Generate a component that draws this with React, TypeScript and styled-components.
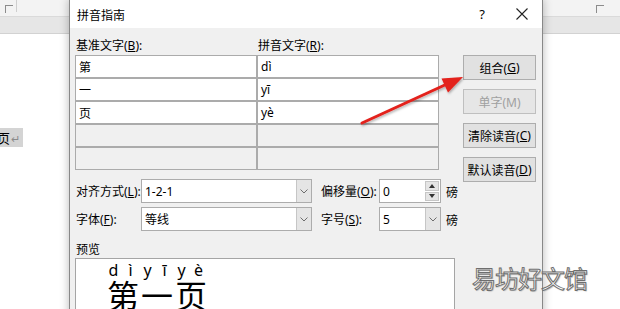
import React from "react";
import styled, { createGlobalStyle } from "styled-components";

const GlobalStyle = createGlobalStyle`
  html, body { margin: 0; padding: 0; background: #ffffff; }
  body { font-family: "Noto Sans", "Noto Sans CJK SC", sans-serif; font-size: 12px; color: #000; }
`;

const Screen = styled.div`
  position: relative;
  width: 620px;
  height: 309px;
  overflow: hidden;
  background: #ffffff;
`;

const RibbonStrip = styled.div`
  height: 16px;
  background: #f3f3f3;
  border-bottom: 1px solid #dadada;
  display: flex;
  align-items: flex-start;
`;

const Launcher = styled.div<{ $left: number }>`
  width: 7px;
  height: 7px;
  margin: 5px 0 0 ${(p) => p.$left}px;
  border: 1px solid #8c8c8c;
  border-right: none;
  border-bottom: none;
`;

const Divider = styled.div`
  width: 1px;
  height: 12px;
  margin-left: 3px;
  background: #cfcfcf;
`;

const RulerBand = styled.div`
  height: 16px;
  background: #e6e6e6;
  border-bottom: 1px solid #d2d2d2;
`;

const DocArea = styled.div`
  padding-top: 94px;
`;

const DocLine = styled.div`
  display: inline-flex;
  align-items: center;
  height: 19px;
  margin-left: -3px;
  padding-right: 3px;
  background: #d4d4d4;
  font-family: "Noto Sans CJK SC", sans-serif;
  font-size: 13px;
`;

const Pilcrow = styled.span`
  color: #8a8a8a;
  font-size: 11px;
  margin-left: 1px;
`;

const Dialog = styled.div`
  position: absolute;
  left: 69px;
  top: -1px;
  width: 472px;
  height: 330px;
  background: #f0f0f0;
  border: 1px solid #888888;
  box-shadow: 0 0 9px rgba(0, 0, 0, 0.28);
  display: flex;
  flex-direction: column;
`;

const TitleBar = styled.div`
  height: 28px;
  background: #ffffff;
  display: flex;
  align-items: center;
  padding-left: 7px;
`;

const Title = styled.span`
  font-family: "Noto Sans CJK SC", sans-serif;
  font-size: 12px;
  flex: 1;
`;

const TitleButton = styled.div`
  width: 40px;
  height: 28px;
  display: flex;
  align-items: center;
  justify-content: center;
  font-family: "Noto Sans", sans-serif;
  font-size: 13px;
`;

const Body = styled.div`
  padding: 7px 5px 0 5px;
  display: grid;
  grid-template-columns: 364px 73px;
  column-gap: 24px;
  align-items: start;
`;

const LabelRow = styled.div`
  display: grid;
  grid-template-columns: 182px 182px;
  height: 20px;
  align-items: center;
`;

const Label = styled.span<{ $pad?: number }>`
  padding-left: ${(p) => p.$pad ?? 1}px;
  font-size: 12px;
  white-space: nowrap;
  u { text-decoration-thickness: 1px; text-underline-offset: 1px; }
`;

const Table = styled.div`
  display: grid;
  grid-template-columns: 182px 182px;
  grid-auto-rows: 23px;
`;

const Cell = styled.div<{ $empty?: boolean }>`
  border: 1px solid #ababab;
  background: ${(p) => (p.$empty ? "#f0f0f0" : "#ffffff")};
  padding-left: 3px;
  display: flex;
  align-items: center;
  font-size: 12px;
`;

const ButtonColumn = styled.div`
  grid-column: 2;
  grid-row: 1 / span 2;
  display: flex;
  flex-direction: column;
  gap: 9px;
  padding-top: 20px;
`;

const PushButton = styled.div<{ $disabled?: boolean }>`
  height: 25px;
  box-sizing: border-box;
  border: 1px solid ${(p) => (p.$disabled ? "#bfbfbf" : "#adadad")};
  background: ${(p) => (p.$disabled ? "#e6e6e6" : "#e1e1e1")};
  color: ${(p) => (p.$disabled ? "#a0a0a0" : "#000")};
  display: flex;
  align-items: center;
  justify-content: center;
  font-size: 12px;
  u { text-decoration-thickness: 1px; text-underline-offset: 1px; }
`;

const FormGrid = styled.div`
  grid-column: 1;
  width: max-content;
  display: grid;
  grid-template-columns: 66px 171px 67px 62px auto;
  grid-auto-rows: 24px;
  row-gap: 4px;
  margin-top: 9px;
  align-items: center;
`;

const Field = styled.div`
  height: 24px;
  box-sizing: border-box;
  border: 1px solid #acacac;
  background: #ffffff;
  display: flex;
  align-items: stretch;
`;

const FieldValue = styled.div`
  flex: 1;
  padding-left: 3px;
  display: flex;
  align-items: center;
  font-size: 12px;
`;

const DropButton = styled.div`
  width: 14px;
  background: #e5e5e5;
  border-left: 1px solid #c6c6c6;
  display: flex;
  align-items: center;
  justify-content: center;
`;

const Spinner = styled.div`
  width: 14px;
  display: flex;
  flex-direction: column;
  gap: 1px;
  padding: 1px 1px 1px 0;
`;

const SpinPart = styled.div`
  flex: 1;
  background: #e5e5e5;
  border: 1px solid #c6c6c6;
  display: flex;
  align-items: center;
  justify-content: center;
`;

const Unit = styled.span`
  padding-left: 5px;
  font-family: "Noto Sans CJK SC", sans-serif;
  font-size: 12px;
`;

const PreviewSection = styled.div`
  grid-column: 1 / -1;
`;

const PreviewLabel = styled.div`
  height: 18px;
  margin-top: 9px;
  display: flex;
  align-items: center;
  padding-left: 1px;
  font-size: 12px;
`;

const PreviewBox = styled.div`
  width: 380px;
  height: 70px;
  box-sizing: border-box;
  border: 1px solid #a5a5a5;
  background: #ffffff;
  padding: 4px 0 0 29px;
`;

const PinyinRow = styled.div`
  display: flex;
  height: 15px;
  align-items: center;
`;

const PinyinLetter = styled.span`
  width: 17px;
  text-align: center;
  font-family: "Noto Sans", sans-serif;
  font-size: 16px;
  line-height: 15px;
`;

const BigText = styled.div`
  font-family: "Noto Sans CJK SC", sans-serif;
  font-size: 32px;
  line-height: 32px;
  margin-left: 2px;
  letter-spacing: 2px;
`;

const Watermark = styled.div`
  position: absolute;
  left: 472px;
  top: 260px;
  font-family: "Noto Sans CJK SC", sans-serif;
  font-size: 24px;
  color: #ffffff;
  -webkit-text-stroke: 1px #6e6e6e;
  text-shadow: 1px 1px 1px rgba(0, 0, 0, 0.25);
  letter-spacing: -1px;
`;

const ArrowLayer = styled.svg`
  position: absolute;
  left: 0;
  top: 0;
  pointer-events: none;
`;

const Chevron = () => (
  <svg width="8" height="5" viewBox="0 0 8 5">
    <path d="M0.5 0.5 L4 4 L7.5 0.5" fill="none" stroke="#6d6d6d" strokeWidth="1" />
  </svg>
);

const Tri = ({ up }: { up?: boolean }) => (
  <svg width="6" height="4" viewBox="0 0 6 4">
    <path d={up ? "M0 4 L3 0 L6 4 Z" : "M0 0 L3 4 L6 0 Z"} fill="#333" />
  </svg>
);

const rows = [
  ["第", "dì"],
  ["一", "yī"],
  ["页", "yè"],
  ["", ""],
  ["", ""],
];

const buttons = [
  { text: "组合(", key: "G", disabled: false },
  { text: "单字(", key: "M", disabled: true, plain: true },
  { text: "清除读音(", key: "C", disabled: false },
  { text: "默认读音(", key: "D", disabled: false },
];

export default function App() {
  return (
    <Screen>
      <GlobalStyle />
      <RibbonStrip>
        <Launcher $left={5} />
        <Divider />
        <div style={{ flex: 1 }} />
        <Launcher $left={0} />
        <div style={{ width: 16 }} />
      </RibbonStrip>
      <RulerBand />
      <DocArea>
        <DocLine>
          页<Pilcrow>↵</Pilcrow>
        </DocLine>
      </DocArea>

      <Dialog>
        <TitleBar>
          <Title>拼音指南</Title>
          <TitleButton>?</TitleButton>
          <TitleButton>
            <svg width="12" height="12" viewBox="0 0 12 12">
              <path d="M0.5 0.5 L11.5 11.5 M11.5 0.5 L0.5 11.5" stroke="#222" strokeWidth="1.1" />
            </svg>
          </TitleButton>
        </TitleBar>
        <Body>
          <div>
            <LabelRow>
              <Label>
                基准文字(<u>B</u>):
              </Label>
              <Label>
                拼音文字(<u>R</u>):
              </Label>
            </LabelRow>
            <Table>
              {rows.map(([base, py], i) => (
                <React.Fragment key={i}>
                  <Cell $empty={!base}>{base}</Cell>
                  <Cell $empty={!base}>{py}</Cell>
                </React.Fragment>
              ))}
            </Table>
          </div>
          <ButtonColumn>
            {buttons.map((b) => (
              <PushButton key={b.key} $disabled={b.disabled}>
                {b.text}
                {b.plain ? b.key : <u>{b.key}</u>})
              </PushButton>
            ))}
          </ButtonColumn>

          <FormGrid>
            <Label>
              对齐方式(<u>L</u>):
            </Label>
            <Field>
              <FieldValue>1-2-1</FieldValue>
              <DropButton>
                <Chevron />
              </DropButton>
            </Field>
            <Label $pad={9}>
              偏移量(<u>O</u>):
            </Label>
            <Field>
              <FieldValue>0</FieldValue>
              <Spinner>
                <SpinPart>
                  <Tri up />
                </SpinPart>
                <SpinPart>
                  <Tri />
                </SpinPart>
              </Spinner>
            </Field>
            <Unit>磅</Unit>

            <Label>
              字体(<u>F</u>):
            </Label>
            <Field>
              <FieldValue>等线</FieldValue>
              <DropButton>
                <Chevron />
              </DropButton>
            </Field>
            <Label $pad={9}>
              字号(<u>S</u>):
            </Label>
            <Field>
              <FieldValue>5</FieldValue>
              <DropButton>
                <Chevron />
              </DropButton>
            </Field>
            <Unit>磅</Unit>
          </FormGrid>

          <PreviewSection>
            <PreviewLabel>预览</PreviewLabel>
            <PreviewBox>
              <PinyinRow>
                {["d", "ì", "y", "ī", "y", "è"].map((c, i) => (
                  <PinyinLetter key={i}>{c}</PinyinLetter>
                ))}
              </PinyinRow>
              <BigText>第一页</BigText>
            </PreviewBox>
          </PreviewSection>
        </Body>
      </Dialog>

      <ArrowLayer width="620" height="309" viewBox="0 0 620 309">
        <defs>
          <filter id="arrowShadow" x="-10%" y="-10%" width="130%" height="140%">
            <feDropShadow dx="1" dy="1.5" stdDeviation="1" floodColor="#000" floodOpacity="0.3" />
          </filter>
        </defs>
        <g filter="url(#arrowShadow)">
          <line x1="362" y1="123" x2="447" y2="84" stroke="#e3201b" strokeWidth="3" strokeLinecap="round" />
          <path d="M463 77 L441.5 78.5 L448 92.5 Z" fill="#e3201b" />
        </g>
      </ArrowLayer>

      <Watermark>易坊好文馆</Watermark>
    </Screen>
  );
}
